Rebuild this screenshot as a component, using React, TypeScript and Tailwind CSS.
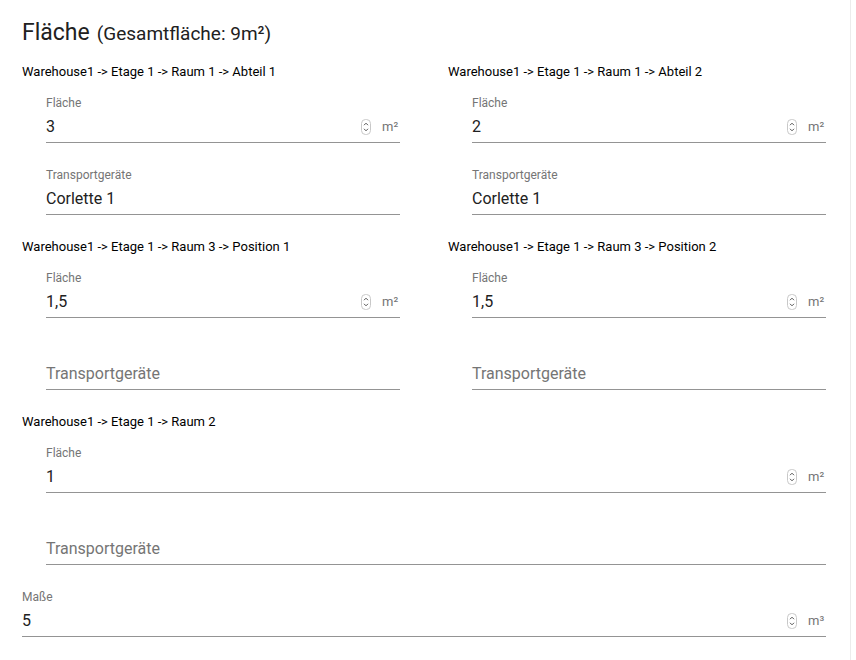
import React from "react";

const font = { fontFamily: "Roboto, 'Noto Sans', sans-serif" };

function Spinner() {
  return (
    <svg width="10" height="16" viewBox="0 0 10 16" className="shrink-0">
      <rect x="0.5" y="0.5" width="9" height="15" rx="4" fill="#fff" stroke="#c8c8c8" />
      <path d="M3 6.2 L5 4.2 L7 6.2" fill="none" stroke="#555" strokeWidth="1" />
      <path d="M3 9.8 L5 11.8 L7 9.8" fill="none" stroke="#555" strokeWidth="1" />
    </svg>
  );
}

function Field({
  label,
  value,
  unit,
  first,
  placeholder,
}: {
  label: string;
  value?: string;
  unit?: string;
  first?: boolean;
  placeholder?: boolean;
}) {
  return (
    <div className={`${first ? "pt-[16px]" : "pt-[25px]"} border-b border-[#949494] pb-[3px]`}>
      <div className={`text-[12px] leading-[14px] text-[#757575] ${placeholder ? "invisible" : ""}`}>{label}</div>
      <div className="mt-[5px] flex h-[24px] items-center">
        <div className={`flex-1 text-[16px] leading-[24px] ${placeholder ? "text-[#757575]" : "text-[#212121]"}`}>
          {placeholder ? label : value}
        </div>
        {unit && (
          <div className="flex items-center">
            <Spinner />
            <span className="ml-[11px] w-[18px] text-[13px] text-[#757575]">{unit}</span>
          </div>
        )}
      </div>
    </div>
  );
}

function Section({
  heading,
  area,
  transport,
}: {
  heading: string;
  area: string;
  transport?: string;
}) {
  return (
    <div className="mt-[23px]">
      <div className="text-[13px] leading-[17px] text-[#000]">{heading}</div>
      <div className="pl-[24px]">
        <Field label="Fläche" value={area} unit="m²" first />
        {transport ? (
          <Field label="Transportgeräte" value={transport} />
        ) : (
          <Field label="Transportgeräte" placeholder />
        )}
      </div>
    </div>
  );
}

export default function App() {
  return (
    <div style={font} className="h-[660px] w-[856px] bg-white">
      <div className="h-[660px] w-[851px] border-r border-[#ececec] pl-[22px] pr-[24px]">
        <div className="flex items-baseline pt-[18px] leading-[30px] text-[#212121]">
          <span className="text-[23px]">Fläche</span>
          <span className="ml-[7px] text-[19px]">(Gesamtfläche: 9m²)</span>
        </div>
        <div className="-mt-[9px] grid grid-cols-2 gap-x-[48px]">
          <Section heading="Warehouse1 -> Etage 1 -> Raum 1 -> Abteil 1" area="3" transport="Corlette 1" />
          <Section heading="Warehouse1 -> Etage 1 -> Raum 1 -> Abteil 2" area="2" transport="Corlette 1" />
          <Section heading="Warehouse1 -> Etage 1 -> Raum 3 -> Position 1" area="1,5" />
          <Section heading="Warehouse1 -> Etage 1 -> Raum 3 -> Position 2" area="1,5" />
        </div>
        <Section heading="Warehouse1 -> Etage 1 -> Raum 2" area="1" />
        <Field label="Maße" value="5" unit="m³" />
      </div>
    </div>
  );
}
